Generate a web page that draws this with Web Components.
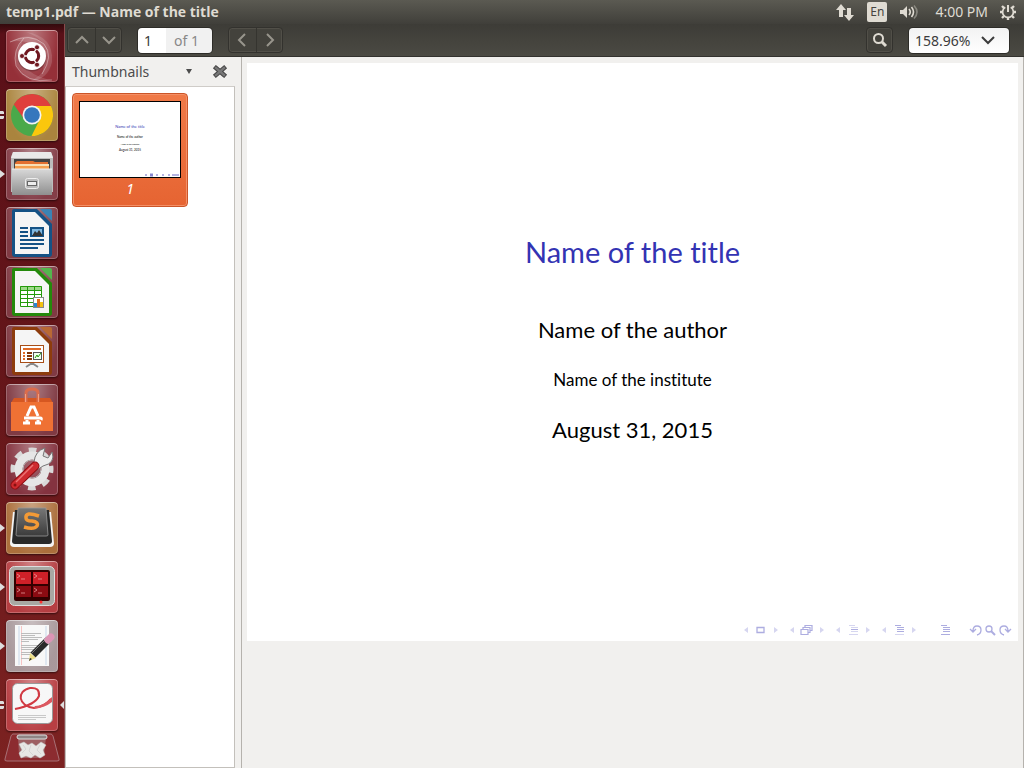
<!DOCTYPE html>
<html lang="en">
<head>
<meta charset="utf-8">
<title>temp1.pdf — Name of the title</title>
<style>
html,body{height:100%}
body{margin:0;overflow:hidden;background:#f1f0ee;font-family:"Noto Sans","Open Sans",sans-serif;font-size:14px;color:#4c4c4c}
</style>
</head>
<body>
<desktop-shell></desktop-shell>

<template id="t-desktop">
<style>
:host{display:flex;flex-direction:column;height:100vh;min-height:0}
.work{flex:1;display:flex;min-height:0}
.window{flex:1;display:flex;flex-direction:column;min-width:0}
.panes{flex:1;display:flex;min-height:0}
</style>
<top-panel><span>temp1.pdf — Name of the title</span></top-panel>
<div class="work">
<app-launcher></app-launcher>
<main class="window">
<viewer-toolbar></viewer-toolbar>
<div class="panes">
<side-pane></side-pane>
<document-view></document-view>
</div>
</main>
</div>
</template>

<template id="t-panel">
<style>
:host{display:flex;align-items:center;height:24px;padding:0 8px 0 6px;background:linear-gradient(#5b5a52,#403f3a);color:#dfdbd2}
h1{flex:1;margin:0;font-family:"Open Sans",sans-serif;font-size:14px;line-height:24px;font-weight:700}
.tray{display:flex;align-items:center}
svg{display:block;width:20px;height:20px}
button{border:0;background:none;padding:0;margin:0;color:inherit;font:inherit}
.lang{width:20px;height:20px;background:#dfdbd2;color:#45443f;border-radius:2px;font-size:12px;line-height:20px;margin:0 12px}
time{margin:0 12px 0 16px;line-height:24px}
.gear,.gear svg{width:16px;height:16px}
</style>
<h1><slot></slot></h1>
<div class="tray">
<button aria-label="Network"><svg viewBox="0 0 20 20" fill="#dfdbd2"><path d="M6 2L11 8H8V15H4V8H1zM14 19L9 13H12V6H16V13H19z"/></svg></button>
<button class="lang">En</button>
<button aria-label="Sound"><svg viewBox="0 0 20 20"><path d="M1 8H4L8 4V16L4 12H1z" fill="#dfdbd2"/><g fill="none" stroke="#dfdbd2" stroke-width="1.600"><path d="M10 7Q12.500 10 10 13M12.500 5Q16.500 10 12.500 15"/><path d="M15 3.500Q21 10 15 16.500" opacity=".4"/></g></svg></button>
<time>4:00 PM</time>
<button class="gear" aria-label="Session"><svg viewBox="0 0 16 16" fill="none" stroke="#dfdbd2"><g stroke-width="2.400"><path d="M13 8H16M0 8H3M8 13V16M4 4L2 2M12 4L14 2M4 12L2 14M12 12L14 14"/></g><path d="M5.300 3.300A5.400 5.400 0 1 0 10.700 3.300" stroke-width="1.700"/><path d="M8 1V8" stroke-width="2"/></svg></button>
</div>
</template>

<template id="t-tile">
<style>
:host{display:block;position:relative;width:52px;height:52px;flex:none}
button{display:block;width:52px;height:52px;margin:0;padding:0;border:0;border-radius:4px;background:radial-gradient(ellipse at 50% 0,#ffffff66,#ffffff12 75%),var(--tile,#762b35);box-shadow:inset 0 0 0 1px #ffffff38,inset 0 1px 0 #ffffff55,0 1px 2px #0008;overflow:hidden}
.mark{position:absolute;left:-6px;top:21px;width:6px;height:10px;display:none}
:host([state=one]) .one,:host([state=many]) .many,:host([active]) .here{display:block}
.here{left:53px;width:6px}
</style>
<button><slot></slot></button>
<svg class="mark one" viewBox="0 0 6 10"><path d="M0 1L5 5L0 9z" fill="#dedede"/></svg>
<svg class="mark many" viewBox="0 0 6 10"><path d="M0 1H3L4 2V4H0zM0 6H4V8L3 9H0z" fill="#dedede"/></svg>
<svg class="mark here" viewBox="0 0 6 10"><path d="M5 1L1 5L5 9z" fill="#dedede"/></svg>
</template>

<template id="t-launcher">
<style>
:host{display:flex;flex-direction:column;gap:7px;width:59px;padding:6px 0 0 6px;flex:none;min-height:0;overflow:hidden;background:linear-gradient(#330a0d,#5a1018 10px,#641519 45%,#7c2221);box-shadow:inset -1px 0 #8a4a4c}
svg{display:block;width:52px;height:52px}
.trash{margin:-5px 0 0 -2px;width:56px;height:32px;padding:0;border:0;background:none;flex:none}
.trash svg{width:56px;height:32px}
</style>
<launcher-tile style="--tile:#8d2029"><svg viewBox="0 0 52 52" role="img" aria-label="Dash">
<g fill="#fff" fill-opacity=".14"><path d="M4 12Q24 0 38 14Q48 26 36 44Q42 24 28 15Q16 9 4 12z"/><path d="M46 50Q20 56 10 36Q6 20 18 8Q8 28 22 40Q32 48 46 50z"/><path d="M20 2Q48 6 46 32Q42 50 24 51Q44 42 42 24Q38 8 20 2z"/></g>
<g fill="none" stroke="#fff" stroke-opacity=".35"><path d="M4 12Q24 2 38 14Q48 26 36 44M46 50Q20 54 10 36Q6 20 18 8"/></g>
<circle cx="26" cy="27" r="14.500" fill="#0003"/><circle cx="26" cy="26" r="14" fill="#fff"/><circle cx="26" cy="26" r="6.600" fill="none" stroke="#701820" stroke-width="3.200"/>
<path d="M26 26L14 26M26 26L32 15.600M26 26L32 36.400" stroke="#fff" stroke-width="1.300"/><circle cx="26" cy="26" r="5" fill="#fff"/>
<g fill="#701820" stroke="#fff" stroke-width=".8"><circle cx="16" cy="26" r="2.500"/><circle cx="31" cy="17.300" r="2.500"/><circle cx="31" cy="34.700" r="2.500"/></g></svg></launcher-tile>
<launcher-tile state="many" style="--tile:#a47b2f"><svg viewBox="0 0 52 52" role="img" aria-label="Chrome">
<circle cx="26" cy="26" r="21" fill="#4aa94a"/><path d="M7.800 15.500A21 21 0 0 1 45 17H26L18 30z" fill="#df3f3c"/><path d="M26 17H45A21 21 0 0 1 25.500 47L34 30z" fill="#fbc70d"/><circle cx="26" cy="26" r="9.500" fill="#f4f4f4"/><circle cx="26" cy="26" r="7.800" fill="#3577bd"/></svg></launcher-tile>
<launcher-tile state="one" style="--tile:#7b2f3a"><svg viewBox="0 0 52 52" role="img" aria-label="Files">
<defs><linearGradient id="c" x2="0" y2="1"><stop stop-color="#d8d8d8"/><stop offset="1" stop-color="#8f8f8f"/></linearGradient></defs>
<path d="M7 4H45L47 9V44H5V9z" fill="#bcbcbc"/><path d="M7 4H45L47 10H5z" fill="#e9e9e9"/><path d="M8 11H44V24H8z" fill="#444"/><path d="M9 15L11 13H27L29 14H42V22H9z" fill="#e37030"/><path d="M9 16H43V18H9z" fill="#f8dfb5"/><path d="M9 18H43V22H9z" fill="#f5a04f"/><path d="M6 21H46V47H6z" fill="url(#c)"/><path d="M6 21H46" stroke="#eee"/><rect x="19.500" y="30.500" width="13" height="10" rx="2" fill="#bbb" stroke="#eee"/><rect x="21.500" y="33.500" width="9" height="4" fill="#eee" stroke="#666"/></svg></launcher-tile>
<launcher-tile><svg viewBox="0 0 52 52" role="img" aria-label="Writer">
<path d="M8 2H31L46 17V47Q46 50 43 50H9Q6 50 6 47V4Q6 2 8 2z" fill="#155285"/><path d="M34 2H44Q46 2 46 4V14z" fill="#3b83b4"/><path d="M9 5H29L43 19V47H9z" fill="#f5f5f5"/><g stroke="#155285" stroke-width="2"><path d="M14 21H22M14 25H22M14 29H22M14 33H38M14 37H38M14 41H32"/></g><rect x="25" y="21" width="12" height="8" fill="#80b8e0" stroke="#155285" stroke-width="2"/><path d="M26 29L29 24L31 26L33 23L37 29z" fill="#333"/></svg></launcher-tile>
<launcher-tile><svg viewBox="0 0 52 52" role="img" aria-label="Calc">
<path d="M8 2H31L46 17V47Q46 50 43 50H9Q6 50 6 47V4Q6 2 8 2z" fill="#24890b"/><path d="M34 2H44Q46 2 46 4V14z" fill="#54b64d"/><path d="M9 5H29L43 19V47H9z" fill="#f5f5f5"/><path d="M14 20H36V41H14z" fill="#fff"/><path d="M14 20H36V24H14z" fill="#9ed98a"/><path d="M14.500 20.500H35.500V40.500H14.500zM14 24.500H36M14 28.500H36M14 32.500H36M14 36.500H36M21.500 20V41M28.500 20V41" fill="none" stroke="#249a0b"/><rect x="27.500" y="31.500" width="10" height="10" fill="#fff" stroke="#888"/><path d="M28 37H31V41H28z" fill="#2c86d0"/><path d="M31 33H34V41H31z" fill="#e36b16"/><path d="M34 36H37V41H34z" fill="#f2c311"/></svg></launcher-tile>
<launcher-tile><svg viewBox="0 0 52 52" role="img" aria-label="Impress">
<path d="M8 2H31L46 17V47Q46 50 43 50H9Q6 50 6 47V4Q6 2 8 2z" fill="#8d3c0d"/><path d="M34 2H44Q46 2 46 4V14z" fill="#b96934"/><path d="M9 5H29L43 19V47H9z" fill="#f5f5f5"/><path d="M26 37V40M26 38L20 42M26 38L32 42" stroke="#888" stroke-width="2"/><rect x="14.500" y="20.500" width="23" height="17" fill="#fff" stroke="#a84e17"/><path d="M17 24H35" stroke="#df6a27" stroke-width="2"/><path d="M17 28H19M17 31H19M17 34H19" stroke="#df6a27" stroke-width="2"/><path d="M21 28H26M21 31H26M21 34H26" stroke="#843708" stroke-width="2"/><rect x="27.500" y="27.500" width="8" height="7" fill="#efe" stroke="#555"/><path d="M29 33L31 30L32 32L35 28" stroke="#249a0b" fill="none"/></svg></launcher-tile>
<launcher-tile><svg viewBox="0 0 52 52" role="img" aria-label="Software Center">
<path d="M8 14H44L47 19H5z" fill="#d65721"/><path d="M20 18V9Q20 5 26 5Q32 5 32 9V18" fill="none" stroke="#db6c4c" stroke-width="3"/><path d="M5 18H47V47H5z" fill="#ef7134"/><path d="M19.500 18V10M32.500 18V10" stroke="#f4a080"/><g fill="none" stroke="#fff" stroke-width="3"><path d="M21 32L25 23H28L32 32M17 39H24M29 39H35M21 36V39M32 36V39"/><path d="M18 34H34Q36 34 35 36" stroke-width="3"/></g></svg></launcher-tile>
<launcher-tile style="--tile:#7b2431"><svg viewBox="0 0 52 52" role="img" aria-label="System Settings">
<circle cx="26" cy="26" r="18.500" fill="none" stroke="#d9d9d9" stroke-width="6" stroke-dasharray="7.500 7.030" stroke-dashoffset="3.750"/><circle cx="26" cy="26" r="13.500" fill="none" stroke="#e6e6e6" stroke-width="8"/><circle cx="26" cy="26" r="9" fill="none" stroke="#b5b5b5"/><path d="M28 19Q29 8 39 5L37 13L42 15L46 9Q50 20 37 23L28 29z" fill="#ececec" stroke="#777"/><path d="M9 42L29 23" stroke="#8e0d12" stroke-width="9" stroke-linecap="round"/><path d="M9 42L29 23" stroke="#ce2b2f" stroke-width="7" stroke-linecap="round"/><path d="M10 39L27 22" stroke="#ec7475" stroke-width="1.500"/><circle cx="9" cy="42" r="1.500" fill="#811"/></svg></launcher-tile>
<launcher-tile state="one" style="--tile:#a5642d"><svg viewBox="0 0 52 52" role="img" aria-label="Sublime Text">
<defs><linearGradient id="k" x2="0" y2="1"><stop stop-color="#777"/><stop offset="1" stop-color="#3b3b3b"/></linearGradient></defs>
<path d="M7 10H45L48 41Q48 45 44 45H8Q4 45 4 41z" fill="#f4f4f4"/><path d="M9 8H43L46 39Q46 42 43 42H9Q6 42 6 39z" fill="#292929"/><path d="M12 6H40L42 33Q42 34 40 34H12Q10 34 10 33z" fill="url(#k)" stroke="#999" stroke-width=".8"/><path d="M33 14Q19 9 20 16Q20 19 26 19Q33 20 31 24Q28 28 18 25" fill="none" stroke="#f39a36" stroke-width="3.500"/></svg></launcher-tile>
<launcher-tile state="one" style="--tile:#b03034"><svg viewBox="0 0 52 52" role="img" aria-label="Terminator">
<rect x="3.500" y="5.500" width="45" height="39" rx="5" fill="#a8a8a3" stroke="#ddd"/><rect x="8" y="9" width="36" height="31" rx="2" fill="#300"/><path d="M10 11H25V23H10zM27 11H42V23H27z" fill="#cf2028"/><path d="M10 25H25V36H10zM27 25H42V36H27z" fill="#8b0b12"/><path d="M11 13L14 15L11 17M15 18H19M28 13L31 15L28 17M32 18H36M11 27L14 29L11 31M15 32H19M28 27L31 29L28 31M32 32H36" fill="none" stroke="#ecaaaa" stroke-opacity=".7"/><circle cx="35" cy="41" r="1.500" fill="#f33"/></svg></launcher-tile>
<launcher-tile state="one" style="--tile:#a29194"><svg viewBox="0 0 52 52" role="img" aria-label="Text Editor">
<path d="M9 5H43V46H9z" fill="#f8f8f8"/><path d="M13 6V45M40 6V45" stroke="#c8d8ea"/><path d="M15.500 6V45" stroke="#f6c4c4"/><path d="M15 13.500H35M15 15.500H29M15 17.500H36M15 19.500H32M15 21.500H23M15 25.500H35M15 27.500H32M15 29.500H30M15 32.500H29M15 34.500H25M15 38.500H25" stroke="#bdbdbd"/><path d="M27 35L42 20" stroke="#292929" stroke-width="7"/><path d="M26 33L39 20" stroke="#777"/><path d="M40 22L43 19" stroke="#bbb" stroke-width="7"/><path d="M42 20L45 17" stroke="#dc94b5" stroke-width="7" stroke-linecap="round"/><path d="M23 41L24 33L30 38z" fill="#eddf87"/><path d="M23 41L24 38L26 39z" fill="#222"/></svg></launcher-tile>
<launcher-tile state="many" active style="--tile:#b23035"><svg viewBox="0 0 52 52" role="img" aria-label="Document Viewer">
<rect x="6.500" y="4.500" width="40" height="40" rx="5" fill="#f7f7f7" stroke="#999"/><path d="M9 30Q29 26 33 17Q34 8 24 9C10 12 12 27 28 29Q38 28 45 20" fill="none" stroke="#d13a43" stroke-width="2"/><path d="M29 27Q38 27 46 18V23Q37 30 28 29z" fill="#dc5961"/><path d="M12 36.500H40M12 38.500H40M12 40.500H30" stroke="#c8c8c8"/></svg></launcher-tile>
<button class="trash"><svg viewBox="0 0 56 32" role="img" aria-label="Trash"><path d="M9 1H47Q48 1 49 3L55 26Q56 28 53 28H3Q0 28 1 26L7 3Q8 1 9 1z" fill="#8c2c30" stroke="#a87075"/><path d="M14 4H42L40 22Q39 25 37 25H18Q16 25 15 22z" fill="#a98485" fill-opacity=".6"/><g fill="#e7e7e5" stroke="#c4c4c4" stroke-width=".5"><path d="M15 11L20 9L24 12L28 10L32 13L37 9L42 12L39 17L41 22L36 25L31 22L27 25L22 23L17 25L15 20L18 17z"/><path d="M19 12L22 16L18 20M27 12L25 18L29 22M36 12L33 17L37 21" fill="none"/></g><rect x="13" y="2" width="30" height="4" rx="2" fill="#8f8585" stroke="#ddd"/></svg></button>
</template>

<template id="t-toolbar">
<style>
:host{display:flex;align-items:center;height:32px;flex:none;padding:0 15px 0 2px;background:linear-gradient(#3d3c37,#4b4a43);border-bottom:1px solid #33322e}
.group{display:flex;border:1px solid #33322e;border-radius:4px;background:#43423c;box-shadow:0 0 0 1px #514f48 inset}
.group button{width:27px;height:24px;padding:0;border:0;background:none;display:grid;place-items:center}
.group button+button{border-left:1px solid #35342f;width:26px}
svg{width:16px;height:16px}
.page{display:flex;align-items:center;width:74px;height:25px;margin:0 16px 0 16px;border-radius:4px;background:linear-gradient(90deg,#fff 28px,#f1f1f1 28px);box-shadow:0 0 0 1px #2d2c28;color:#888}
.page input{width:28px;height:25px;box-sizing:border-box;padding:0 0 0 6px;border:0;background:none;font:inherit;color:#3c3c3c;margin-right:8px}
.gap{flex:1}
.find{margin-right:16px}
.find button{width:25px}
.zoom{position:relative;width:100px;height:25px}
.zoom select{appearance:none;width:100px;height:25px;border:0;border-radius:4px;padding:0 0 0 6px;background:linear-gradient(#f2f2f2,#fff);font:inherit;color:#3c3c3c;box-shadow:0 0 0 1px #2d2c28}
.zoom svg{position:absolute;right:13px;top:4px;pointer-events:none}
</style>
<div class="group"><button aria-label="Previous page"><svg viewBox="0 0 16 16"><path d="M2 11L8 5L14 11" fill="none" stroke="#98958c" stroke-width="2"/></svg></button><button aria-label="Next page"><svg viewBox="0 0 16 16"><path d="M2 5L8 11L14 5" fill="none" stroke="#98958c" stroke-width="2"/></svg></button></div>
<label class="page"><input value="1" aria-label="Page"><span>of 1</span></label>
<div class="group"><button aria-label="Back"><svg viewBox="0 0 16 16"><path d="M10 2L4 8L10 14" fill="none" stroke="#98958c" stroke-width="2"/></svg></button><button aria-label="Forward"><svg viewBox="0 0 16 16"><path d="M5 2L11 8L5 14" fill="none" stroke="#98958c" stroke-width="2"/></svg></button></div>
<span class="gap"></span>
<div class="group find"><button aria-label="Find"><svg viewBox="0 0 16 16" fill="none" stroke="#dfdbd2"><circle cx="6.500" cy="6.500" r="4.500" stroke-width="2"/><path d="M10 10L14 14" stroke-width="3"/></svg></button></div>
<div class="zoom"><select aria-label="Zoom"><option>158.96%</option></select><svg viewBox="0 0 16 16"><path d="M2 5L8 11L14 5" fill="none" stroke="#3c3c3c" stroke-width="2"/></svg></div>
</template>

<template id="t-side">
<style>
:host{display:flex;flex-direction:column;width:170px;flex:none;padding-right:6px}
header{display:flex;align-items:center;height:29px;padding:0 7px 0 7px;flex:none}
.pick{flex:1;display:flex;align-items:center;justify-content:space-between;padding:0 20px 0 0;border:0;background:none;font:inherit;color:#4c4c4c}
.close{width:16px;height:16px;padding:0;border:0;background:none}
svg{display:block}
.list{flex:1;margin:0;padding:6px;background:#fff;border:1px solid #c3c0bb;border-top-color:#cfccc8;list-style:none;min-height:0}
figure{box-sizing:border-box;width:116px;height:114px;margin:0;padding:7px 6px;border:1px solid #cb5528;border-radius:4px;background:linear-gradient(#f07a48,#e66432);box-shadow:inset 0 0 0 1px #f48f66}
figcaption{text-align:center;font-style:italic;color:#fff;line-height:21px}
.mini{box-sizing:border-box;display:flex;flex-direction:column;align-items:center;position:relative;width:102px;height:77px;border:1px solid #000;background:#fff;padding-top:21px;font-family:Lato,sans-serif;font-variant-ligatures:none;font-size:3px;color:#000}
.mini b{font-weight:400;font-size:4px;line-height:8px;margin-bottom:3px;color:#3333b3}
.mini span{line-height:7px}
.mini small{font-size:2px;line-height:6px}
.mini svg{position:absolute;right:0;bottom:0}
</style>
<header><button class="pick"><span>Thumbnails</span><svg width="6" height="5" viewBox="0 0 6 5"><path d="M0 0H6L3 5z" fill="#4c4c4c"/></svg></button><button class="close" aria-label="Close"><svg viewBox="0 0 16 16" width="16" height="16"><path d="M4 4L12 11M12 4L4 11" stroke="#444" stroke-width="4.400" stroke-linecap="square"/><path d="M4 4L12 11M12 4L4 11" stroke="#777" stroke-width="2.400" stroke-linecap="square"/></svg></button></header>
<ul class="list"><li><figure>
<div class="mini"><b>Name of the title</b><span>Name of the author</span><small>Name of the institute</small><span>August 31, 2015</span><svg width="36" height="4" viewBox="0 0 36 4" stroke="#b4b4e2"><path d="M1 2H3M12 2H14M18 2H20M24 2H26M28 2H35" stroke-width="2"/><path d="M6 2H9" stroke="#8686cf" stroke-width="3"/></svg></div>
<figcaption>1</figcaption></figure></li></ul>
</template>

<template id="t-doc">
<style>
:host{display:block;flex:1;min-width:0;padding:6px 5px 0 5px;border-left:1px solid #b5b2ad;border-right:1px solid #b5b2ad;background:#f1f0ee;overflow:hidden}
</style>
<beamer-slide><span slot="title">Name of the title</span><span slot="author">Name of the author</span><span slot="institute">Name of the institute</span><span slot="date">August 31, 2015</span></beamer-slide>
</template>

<template id="t-slide">
<style>
:host{box-sizing:border-box;display:flex;flex-direction:column;aspect-ratio:4/3;background:#fff;color:#000;font-family:Lato,sans-serif;font-variant-ligatures:none;text-align:center}
.body{flex:1;display:flex;flex-direction:column;justify-content:center;padding-bottom:8px}
h2,p{margin:0;font-weight:400}
h2{font-size:29px;line-height:40px;color:#3333b3;margin-bottom:42px}
p{font-size:22px;line-height:32px}
.small{font-size:17px;line-height:24px;margin:22px 0}
nav{display:flex;justify-content:flex-end;gap:9px;padding:0 6px 4px 0}
a,svg{display:block}
.all{margin:0 9px 0 12px}
</style>
<div class="body"><h2><slot name="title"></slot></h2><p><slot name="author"></slot></p><p class="small"><slot name="institute"></slot></p><p><slot name="date"></slot></p></div>
<nav>
<a href="#slide" aria-label="Slide"><svg width="37" height="14" viewBox="0 0 37 14"><path d="M6 4V10L2 7zM32 4V10L36 7z" fill="#d6d6f0"/><path d="M15 4.500H22V9.500H15z" fill="none" stroke="#adade0" stroke-width="1.300"/></svg></a>
<a href="#frame" aria-label="Frame"><svg width="37" height="14" viewBox="0 0 37 14"><path d="M6 4V10L2 7zM32 4V10L36 7z" fill="#d6d6f0"/><path d="M13 6.500H20V11.500H13zM15 6V4.500H22V9.500H20M17 4V2.500H24V7.500H22" fill="none" stroke="#adade0" stroke-width="1.200"/></svg></a>
<a href="#subsection" aria-label="Subsection"><svg width="37" height="14" viewBox="0 0 37 14"><path d="M6 4V10L2 7zM32 4V10L36 7z" fill="#d6d6f0"/><path d="M15 2.500H21M17 4.500H24M17 8.500H24M15 11.500H24" stroke="#d6d6f0"/><path d="M17 6.500H24" stroke="#adade0"/></svg></a>
<a href="#section" aria-label="Section"><svg width="37" height="14" viewBox="0 0 37 14"><path d="M6 4V10L2 7zM32 4V10L36 7z" fill="#d6d6f0"/><path d="M15 2.500H21M17 4.500H24M17 6.500H24M17 8.500H24" stroke="#adade0"/><path d="M15 11.500H24" stroke="#d6d6f0"/></svg></a>
<a class="all" href="#document" aria-label="Document"><svg width="13" height="14" viewBox="0 0 13 14"><path d="M3 2.500H9M5 4.500H12M5 6.500H12M5 8.500H12M3 11.500H12" stroke="#adade0"/></svg></a>
<a href="#find" aria-label="Back, find, forward"><svg width="43" height="14" viewBox="0 0 43 14" fill="none" stroke="#adade0" stroke-width="1.300"><path d="M1 6L4 9L7 6M4 8Q4 3 8 3Q12 3 12 7Q12 11 8 12M42 6L39 9L36 6M39 8Q39 3 35 3Q31 3 31 7Q31 11 35 12"/><circle cx="20" cy="6" r="3"/><path d="M22 8L26 12" stroke-width="2"/></svg></a>
</nav>
</template>

<script>
const define = (name, templateId) => customElements.define(name, class extends HTMLElement {
  constructor() {
    super();
    this.attachShadow({ mode: 'open' })
      .append(document.getElementById(templateId).content.cloneNode(true));
  }
});
define('top-panel', 't-panel');
define('launcher-tile', 't-tile');
define('app-launcher', 't-launcher');
define('viewer-toolbar', 't-toolbar');
define('side-pane', 't-side');
define('beamer-slide', 't-slide');
define('document-view', 't-doc');
define('desktop-shell', 't-desktop');
</script>
</body>
</html>
